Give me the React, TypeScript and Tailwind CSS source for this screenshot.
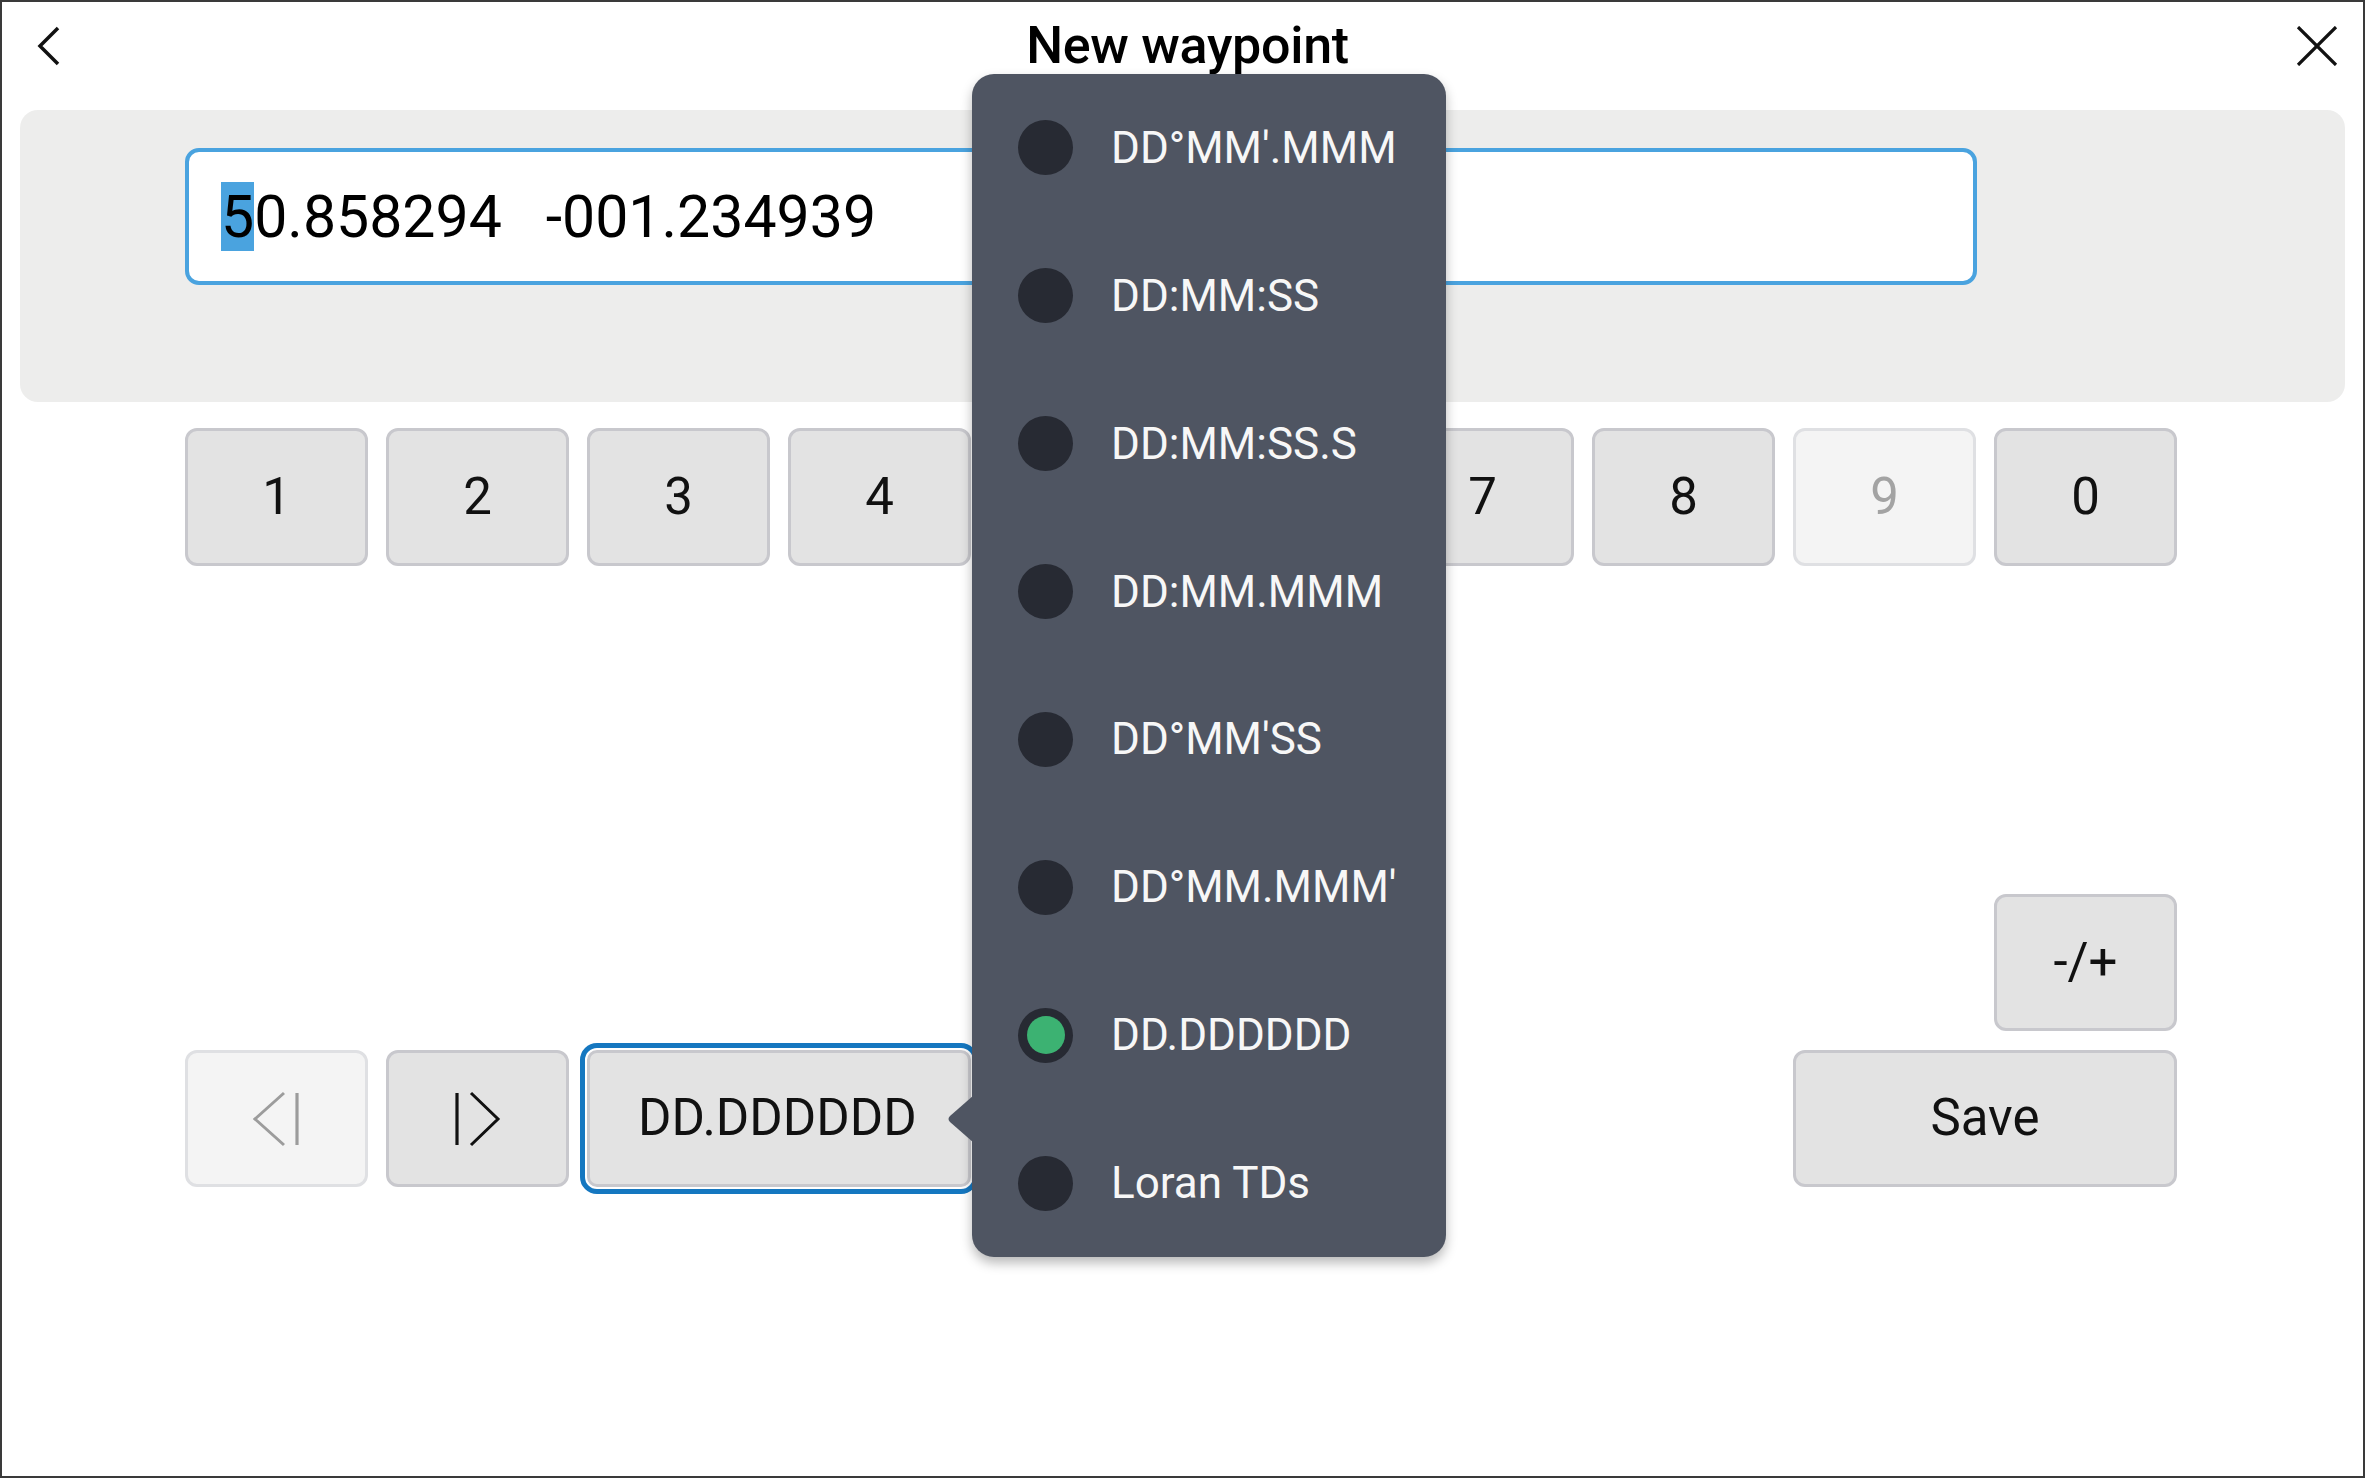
import React from 'react';

const formats = [
  'DD°MM\'.MMM',
  'DD:MM:SS',
  'DD:MM:SS.S',
  'DD:MM.MMM',
  'DD°MM\'SS',
  'DD°MM.MMM\'',
  'DD.DDDDDD',
  'Loran TDs',
];

const keys = ['1', '2', '3', '4', '5', '6', '7', '8', '9', '0'];

const keyBase = 'h-[138px] rounded-[12px] border-[3px] flex items-center justify-center text-[51px]';
const keyOn = 'bg-[#e3e3e3] border-[#c8c8cd] text-[#111]';
const keyOff = 'bg-[#f4f4f4] border-[#dfe0e3] text-[#a3a3a3]';

export default function App() {
  const selected = 'DD.DDDDDD';

  return (
    <div className="relative w-[2365px] h-[1478px] bg-white border-2 border-[#3a3a3a] overflow-hidden font-['Roboto','Liberation_Sans',sans-serif] text-[#111]">
      {/* title bar */}
      <header className="h-[88px] grid grid-cols-[1fr_auto_1fr] items-center pl-[35px] pr-[25px]">
        <div>
          <svg width="24" height="40" viewBox="0 0 24 40">
            <polyline points="21,2 3,20 21,38" fill="none" stroke="#111" strokeWidth="3.5" />
          </svg>
        </div>
        <h1 className="text-[52px] font-medium leading-none tracking-[-0.3px] text-black">New waypoint</h1>
        <div className="flex justify-end">
          <svg width="42" height="40" viewBox="0 0 42 40">
            <line x1="2" y1="1" x2="40" y2="39" stroke="#111" strokeWidth="3.2" />
            <line x1="40" y1="1" x2="2" y2="39" stroke="#111" strokeWidth="3.2" />
          </svg>
        </div>
      </header>

      {/* coordinate entry */}
      <section className="mt-[20px] mx-[18px] h-[292px] rounded-[18px] bg-[#ededec] pl-[165px] pt-[38px]">
        <div className="w-[1792px] h-[137px] bg-white border-[4px] border-[#4aa3df] rounded-[14px] flex items-center pl-[32px]">
          <span className="text-[59px] leading-[70px] whitespace-pre text-black">
            <span className="bg-[#4aa3df]">5</span>0.858294   -001.234939
          </span>
        </div>
      </section>

      {/* keypad */}
      <div className="ml-[183px] mt-[26px] grid grid-cols-[repeat(10,183px)] gap-x-[18px]">
        {keys.map((k) => (
          <div key={k} className={`${keyBase} ${k === '9' ? keyOff : keyOn}`}>
            {k}
          </div>
        ))}
      </div>

      <div className="ml-[183px] mt-[328px] grid grid-cols-[repeat(10,183px)] grid-rows-[137px_137px] gap-x-[18px] gap-y-[19px]">
        <div className={`col-start-10 row-start-1 rounded-[12px] border-[3px] flex items-center justify-center text-[51px] ${keyOn}`}>-/+</div>

        <div className={`col-start-1 row-start-2 rounded-[12px] border-[3px] flex items-center justify-center ${keyOff}`}>
          <svg width="50" height="56" viewBox="0 0 50 56">
            <polyline points="32,2 3,28 32,54" fill="none" stroke="#9c9c9c" strokeWidth="3" />
            <line x1="45" y1="2" x2="45" y2="54" stroke="#9c9c9c" strokeWidth="3.2" />
          </svg>
        </div>
        <div className={`col-start-2 row-start-2 rounded-[12px] border-[3px] flex items-center justify-center ${keyOn}`}>
          <svg width="50" height="56" viewBox="0 0 50 56">
            <line x1="4" y1="2" x2="4" y2="54" stroke="#111" strokeWidth="3.2" />
            <polyline points="18,2 45,28 18,54" fill="none" stroke="#111" strokeWidth="3" />
          </svg>
        </div>
        <div className={`col-start-3 col-span-2 row-start-2 rounded-[10px] border-[3px] flex items-center justify-start pl-[48px] text-[51px] outline-[5px] outline-solid outline-[#1577c0] outline-offset-[2px] ${keyOn}`}>
          DD.DDDDDD
        </div>
        <div className={`col-start-9 col-span-2 row-start-2 rounded-[12px] border-[3px] flex items-center justify-center text-[51px] ${keyOn}`}>Save</div>
      </div>

      {/* format menu */}
      <div className="absolute left-[970px] top-[72px] w-[474px] h-[1183px] rounded-[22px] bg-[#4f5562] shadow-[0_6px_12px_rgba(0,0,0,0.28)] flex flex-col">
        <svg className="absolute left-[-25px] top-[1021px]" width="27" height="48" viewBox="0 0 27 48">
          <path d="M27 0 L3 21 Q0 24 3 27 L27 48 Z" fill="#4f5562" />
        </svg>
        {formats.map((f) => (
          <div key={f} className="flex-1 flex items-center pl-[46px] gap-[38px]">
            <div className="w-[55px] h-[55px] rounded-full bg-[#272a33] flex items-center justify-center shrink-0">
              {f === selected && <div className="w-[38px] h-[38px] rounded-full bg-[#3cb272]" />}
            </div>
            <span className="text-[44px] text-[#f7f7f7] whitespace-pre">{f}</span>
          </div>
        ))}
      </div>
    </div>
  );
}
